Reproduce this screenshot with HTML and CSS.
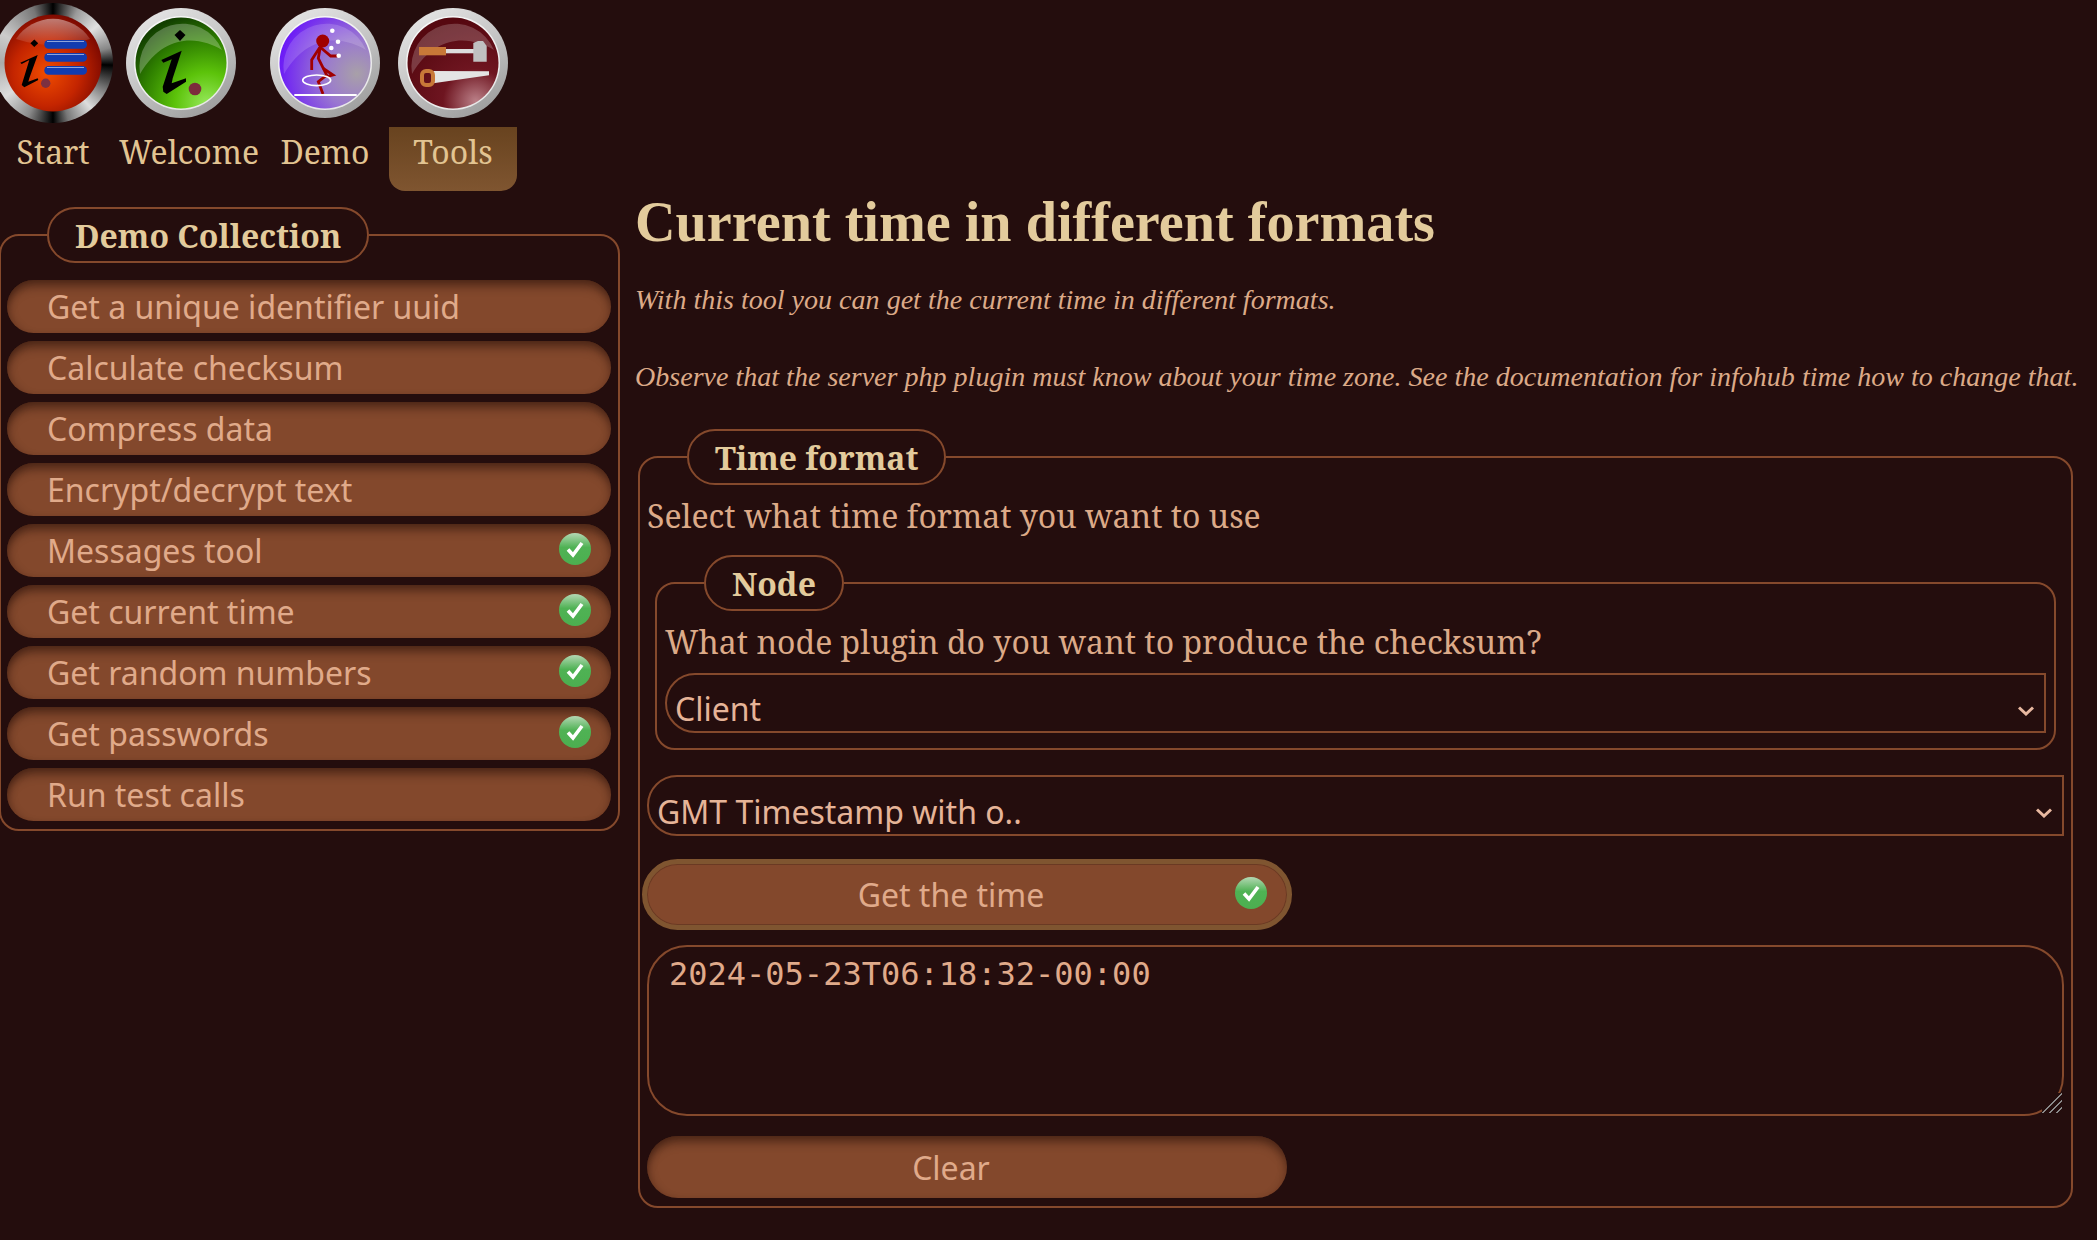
FILE: index.html
```html
<!DOCTYPE html>
<html lang="en">
<head>
    <meta charset="UTF-8">
    <meta name="viewport" content="width=device-width, initial-scale=1.0">
    <title>Current time in different formats</title>
    <link rel="stylesheet" href="styles.css">
</head>
<body>
    <svg class="defs" width="0" height="0" aria-hidden="true">
        <defs>
            <linearGradient id="ringLight" x1="0.2" y1="0" x2="0.8" y2="1">
                <stop offset="0" stop-color="#e6e6e6"/>
                <stop offset="0.5" stop-color="#c4c4c4"/>
                <stop offset="1" stop-color="#9a9a9a"/>
            </linearGradient>
            <linearGradient id="glossRed" x1="0" y1="0" x2="0" y2="1">
                <stop offset="0" stop-color="#fff" stop-opacity="0.45"/>
                <stop offset="1" stop-color="#fff" stop-opacity="0.06"/>
            </linearGradient>
            <radialGradient id="discRed" cx="0.43" cy="0.6" r="0.62">
                <stop offset="0" stop-color="#f04c00"/>
                <stop offset="0.55" stop-color="#c42500"/>
                <stop offset="1" stop-color="#7a0800"/>
            </radialGradient>
            <radialGradient id="discGreen" cx="0.78" cy="0.95" r="1">
                <stop offset="0" stop-color="#96e85a"/>
                <stop offset="0.35" stop-color="#5cc30a"/>
                <stop offset="0.7" stop-color="#2f8000"/>
                <stop offset="1" stop-color="#123f00"/>
            </radialGradient>
            <radialGradient id="discPurple" cx="0.85" cy="0.62" r="0.95">
                <stop offset="0" stop-color="#a8a0a8"/>
                <stop offset="0.4" stop-color="#9a78d0"/>
                <stop offset="1" stop-color="#6208ff"/>
            </radialGradient>
            <radialGradient id="discMaroon" cx="0.75" cy="0.92" r="0.9">
                <stop offset="0" stop-color="#bb8088"/>
                <stop offset="0.4" stop-color="#6e1520"/>
                <stop offset="1" stop-color="#560810"/>
            </radialGradient>
            <linearGradient id="checkBall" x1="0" y1="0" x2="0" y2="1">
                <stop offset="0" stop-color="#b4d8b4"/>
                <stop offset="0.45" stop-color="#4fb254"/>
                <stop offset="1" stop-color="#4caf50"/>
            </linearGradient>
            <symbol id="check" viewBox="0 0 32 32">
                <circle cx="16" cy="16" r="16" fill="url(#checkBall)"/>
                <path d="M9 16.500 L14 22 L23 10" fill="none" stroke="#fff" stroke-width="3.600"/>
            </symbol>
        </defs>
    </svg>

    <nav class="topnav">
        <a class="navitem navitem-start">
            <span class="navicon navicon-start">
                <svg width="120" height="120" viewBox="0 0 120 120">
                    <circle cx="60" cy="60" r="48.500" fill="url(#discRed)"/>
                    <path d="M23 36 A44 44 0 0 1 97 36 Q60 48 23 36 Z" fill="url(#glossRed)"/>
                    <path d="M41.300 36.500 L45.200 40.300 L41.300 44.100 L37.400 40.300 Z"/>
                    <path d="M27.300 59.700 L44.700 52 L36.300 75.300 L35.300 78.700 L44.700 75.300 L45.300 77 L31.300 84.300 L28.700 82 L36.300 57 L28.700 61 Z"/>
                    <circle cx="52.700" cy="80.300" r="4.700" fill="#7c3040"/>
                    <rect x="51.300" y="37" width="42.700" height="8.700" rx="4.300" fill="#123cb0"/>
                    <rect x="51.300" y="50" width="42.700" height="8.700" rx="4.300" fill="#123cb0"/>
                    <rect x="51.300" y="63" width="42.700" height="8.700" rx="4.300" fill="#123cb0"/>
                    <path d="M54 38.500 H91 M54 51.500 H91 M54 64.500 H91" stroke="#8ea4dc" stroke-width="1.200"/>
                </svg>
            </span>
            <span class="navlabel">Start</span>
        </a>
        <a class="navitem navitem-welcome">
            <span class="navicon">
                <svg width="110" height="110" viewBox="0 0 110 110">
                    <circle cx="55" cy="55" r="55" fill="url(#ringLight)"/>
                    <circle cx="55" cy="55" r="47" fill="#fff" opacity="0.75"/>
                    <circle cx="55" cy="55" r="45.500" fill="url(#discGreen)"/>
                    <path d="M14 66 A43 43 0 0 1 96 42 C76 30 40 22 14 66 Z" fill="#fff" opacity="0.26"/>
                    <path d="M54 22 L59.500 27 L54 33 L48.500 27 Z"/>
                    <path d="M35.300 52 L55.700 42.700 L46.700 70.300 L45.700 75.300 L60 70.300 L60 73.700 L40.700 86 L37.300 83.700 L36.700 78.700 L45.700 51.300 L37.300 54.700 Z"/>
                    <circle cx="69" cy="81" r="6.300" fill="#7c2c3c"/>
                </svg>
            </span>
            <span class="navlabel">Welcome</span>
        </a>
        <a class="navitem navitem-demo">
            <span class="navicon">
                <svg width="110" height="110" viewBox="0 0 110 110">
                    <circle cx="55" cy="55" r="55" fill="url(#ringLight)"/>
                    <circle cx="55" cy="55" r="47" fill="#fff" opacity="0.75"/>
                    <circle cx="55" cy="55" r="45.500" fill="url(#discPurple)"/>
                    <path d="M14 66 A43 43 0 0 1 96 42 C76 30 40 22 14 66 Z" fill="#fff" opacity="0.16"/>
                    <circle cx="52.700" cy="33" r="6.500" fill="#a00000"/>
                    <g fill="none" stroke="#a00000" stroke-width="2.800">
                        <path d="M50.500 38 L48.300 50.300 L56.700 67 L48.300 73.700 L53 86"/>
                        <path d="M41.700 62 V52 L50 39 L60.700 48 H68.700"/>
                        <path d="M53.300 60.300 L63 67 L56.700 68.700"/>
                    </g>
                    <ellipse cx="46.700" cy="72.300" rx="14" ry="5.300" fill="none" stroke="#fff" stroke-width="1.600"/>
                    <path d="M24.300 87 H86.700" stroke="#fff" stroke-width="1.800"/>
                    <g fill="#fff">
                        <circle cx="62.300" cy="22.700" r="2.300"/>
                        <circle cx="68" cy="33.700" r="2.300"/>
                        <circle cx="61.300" cy="40" r="2.300"/>
                        <circle cx="68.700" cy="47.700" r="2.300"/>
                    </g>
                </svg>
            </span>
            <span class="navlabel">Demo</span>
        </a>
        <a class="navitem navitem-tools">
            <span class="navicon">
                <svg width="110" height="110" viewBox="0 0 110 110">
                    <circle cx="55" cy="55" r="55" fill="url(#ringLight)"/>
                    <circle cx="55" cy="55" r="47" fill="#fff" opacity="0.75"/>
                    <circle cx="55" cy="55" r="45.500" fill="url(#discMaroon)"/>
                    <path d="M14 66 A43 43 0 0 1 96 42 C76 30 40 22 14 66 Z" fill="#fff" opacity="0.2"/>
                    <rect x="21" y="39" width="27" height="8.300" fill="#c87838"/>
                    <rect x="48" y="41" width="29" height="4.300" fill="#dddddd"/>
                    <path d="M75.300 35 L80 33 H85 L88.700 38 V53.700 H75.300 Z" fill="#c0c0c0"/>
                    <path d="M35.300 63 L91 63.300 V67.300 L35.300 75.300 Z" fill="#e4e4e4"/>
                    <rect x="24" y="63" width="11" height="14" rx="4" fill="none" stroke="#c87838" stroke-width="4"/>
                </svg>
            </span>
            <span class="navlabel">Tools</span>
        </a>
    </nav>

    <div class="columns">
        <fieldset class="panel sidebar">
            <legend>Demo Collection</legend>
            <a class="btn">Get a unique identifier uuid</a>
            <a class="btn">Calculate checksum</a>
            <a class="btn">Compress data</a>
            <a class="btn">Encrypt/decrypt text</a>
            <a class="btn">Messages tool <svg class="ok"><use href="#check"/></svg></a>
            <a class="btn">Get current time <svg class="ok"><use href="#check"/></svg></a>
            <a class="btn">Get random numbers <svg class="ok"><use href="#check"/></svg></a>
            <a class="btn">Get passwords <svg class="ok"><use href="#check"/></svg></a>
            <a class="btn">Run test calls</a>
        </fieldset>

        <main class="content">
            <h1>Current time in different formats</h1>
            <p class="intro">With this tool you can get the current time in different formats.</p>
            <p class="intro">Observe that the server php plugin must know about your time zone. See the documentation for infohub time how to change that.</p>

            <fieldset class="panel format">
                <legend>Time format</legend>
                <label class="hint">Select what time format you want to use</label>
                <fieldset class="panel node">
                    <legend>Node</legend>
                    <label class="hint">What node plugin do you want to produce the checksum?</label>
                    <select class="pick"><option>Client</option></select>
                </fieldset>
                <select class="pick pick-format"><option>GMT Timestamp with o..</option></select>
                <button class="btn btn-submit" type="button"><span class="btntext">Get the time</span><svg class="ok"><use href="#check"/></svg></button>
                <div class="outputbox">
                    <textarea class="output" spellcheck="false">2024-05-23T06:18:32-00:00</textarea>
                </div>
                <button class="btn btn-clear" type="button">Clear</button>
            </fieldset>
        </main>
    </div>
</body>
</html>
```

FILE: styles.css
```css
* {
    box-sizing: border-box;
}

html, body {
    height: 100%;
}

body {
    margin: 0;
    background: #240d0d;
    color: #dcaa88;
    font-family: "Noto Serif", "DejaVu Serif Condensed", "DejaVu Serif", serif;
    font-size: 32px;
    overflow: hidden;
}

.defs {
    position: absolute;
}

.topnav {
    display: flex;
    height: 191px;
    margin-left: -8px;
}

.navitem {
    display: flex;
    flex-direction: column;
    align-items: center;
    color: #e2c492;
}

.navicon {
    display: block;
    height: 127px;
    padding-top: 8px;
}

.navicon svg {
    display: block;
}

.navicon-start {
    padding-top: 3px;
    border-radius: 50%;
}

.navicon-start svg {
    border-radius: 50%;
    background: conic-gradient(#000 0deg, #9a9a9a 25deg, #e0e0e0 50deg, #888 75deg, #000 92deg, #888 120deg, #ddd 140deg, #777 165deg, #000 180deg, #8a8a8a 205deg, #ddd 235deg, #aaa 270deg, #ccc 300deg, #777 340deg, #000 360deg);
}

.navlabel {
    line-height: 50px;
}

.navitem-start {
    width: 122px;
}

.navitem-welcome {
    width: 139px;
    margin-left: 5px;
    align-items: flex-start;
}

.navitem-welcome .navicon {
    margin-left: 7px;
}

.navitem-demo {
    width: 110px;
    margin-left: 12px;
}

.navitem-tools {
    width: 128px;
    margin-left: 9px;
}

.navitem-tools .navlabel {
    width: 100%;
    height: 64px;
    text-align: center;
    border-radius: 0 0 16px 16px;
    background: linear-gradient(#68431f, #7f5530);
}

.columns {
    display: flex;
    align-items: flex-start;
    gap: 15px;
    margin-left: -1px;
}

.panel {
    min-width: 0;
    margin: 0;
    border: 2px solid #85492c;
    border-radius: 20px;
}

.panel legend {
    padding: 0 26px;
    height: 56px;
    line-height: 54px;
    border: 2px solid #85492c;
    border-radius: 28px;
    color: #e3cb9c;
    font-weight: 700;
}

.sidebar {
    display: flex;
    flex-direction: column;
    gap: 8px;
    flex: none;
    width: 621px;
    margin-top: 16px;
    padding: 17px 7px 8px 6px;
}

.sidebar legend {
    margin-left: 40px;
}

.btn {
    display: flex;
    align-items: center;
    justify-content: space-between;
    height: 53px;
    padding: 0 20px 0 40px;
    border: 0;
    border-radius: 27px;
    background: #83482c;
    box-shadow: inset 0 10px 10px -4px rgba(30, 10, 5, 0.5), inset 6px 0 8px -5px rgba(30, 10, 5, 0.35), inset -6px 0 8px -5px rgba(30, 10, 5, 0.2);
    color: #e0aa8a;
    font-family: "Noto Sans", sans-serif;
    font-size: 32px;
}

.ok {
    flex: none;
    width: 32px;
    height: 32px;
    margin-top: -4px;
}

.content {
    flex: 1;
    min-width: 0;
}

h1 {
    margin: -2px 0 0;
    font-family: "Liberation Serif", serif;
    font-size: 56.200px;
    line-height: 66px;
    color: #e3cb9c;
}

.intro {
    margin: 0 0 13px;
    padding-top: 27px;
    font-family: "Liberation Serif", serif;
    font-style: italic;
    font-size: 28.050px;
    line-height: 36px;
    white-space: nowrap;
}

.intro + .intro {
    padding-top: 0;
    margin-top: 41px;
}

.format {
    display: flex;
    flex-direction: column;
    align-items: flex-start;
    margin: 34px 24px 0 3px;
    padding: 0 7px 8px;
}

.format > legend {
    margin-left: 40px;
}

.format > .hint {
    margin-top: 9px;
}

.hint {
    display: block;
    line-height: 44px;
}

.node {
    align-self: stretch;
    margin: 17px 8px 0;
    padding: 0 8px 15px;
}

.node > legend {
    margin-left: 39px;
}

.node > .hint {
    margin-top: 9px;
}

.pick {
    display: block;
    width: 100%;
    height: 60px;
    padding: 11px 0 0 8px;
    border: 2px solid #85492c;
    border-radius: 30px 0 0 30px;
    appearance: none;
    background: transparent url("data:image/svg+xml,%3Csvg xmlns='http://www.w3.org/2000/svg' width='16' height='10'%3E%3Cpath d='M1 1.500 L8 8 L15 1.500' fill='none' stroke='%23e8b8a0' stroke-width='3'/%3E%3C/svg%3E") no-repeat right 10px top 31px;
    color: #e6b498;
    font-family: "Noto Sans", sans-serif;
    font-size: 32px;
}

.node .pick {
    margin-top: 9px;
}

.pick-format {
    height: 61px;
    margin-top: 25px;
}

.btn-submit {
    width: 650px;
    height: 71px;
    margin: 23px 0 0 -5px;
    padding: 0 20px;
    border: 5px solid #7f5530;
    border-radius: 36px;
    box-shadow: inset 0 0 0 1px rgba(50, 25, 15, 0.3);
}

.btntext {
    flex: 1;
    text-align: center;
}

.outputbox {
    position: relative;
    width: 100%;
    margin-top: 15px;
}

.outputbox::after {
    content: "";
    position: absolute;
    right: 2px;
    bottom: 3px;
    width: 20px;
    height: 20px;
    background: linear-gradient(135deg, #240d0d 50%, transparent 50%), repeating-linear-gradient(135deg, transparent 0 3.500px, #8a8a8a 3.500px 5px);
    pointer-events: none;
}

.output {
    display: block;
    width: 100%;
    height: 171px;
    padding: 8px 20px;
    border: 2px solid #85492c;
    border-radius: 40px;
    background: transparent;
    color: #e0aa8a;
    font-family: "DejaVu Sans Mono", monospace;
    font-size: 32px;
    outline: none;
    resize: none;
}

.btn-clear {
    justify-content: center;
    width: 640px;
    height: 62px;
    margin-top: 20px;
    padding: 0 32px 0 0;
    border-radius: 31px;
}
```
